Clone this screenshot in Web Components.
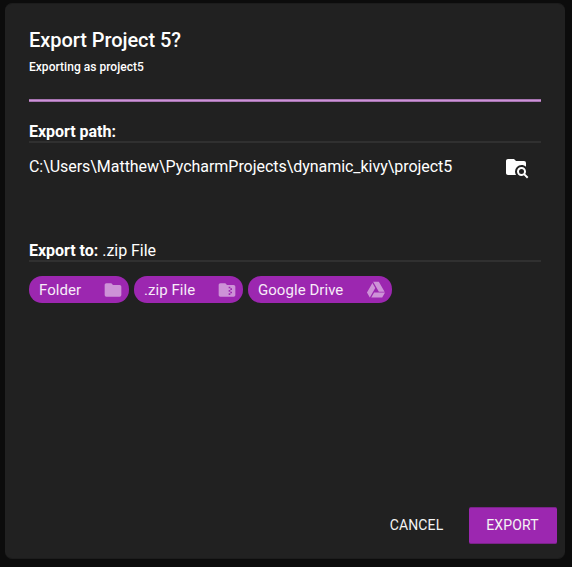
<!DOCTYPE html>
<html lang="en"><head><meta charset="utf-8"><title>Export Project</title>
<style>
html,body{margin:0;height:100%;background:#0c0c0c;overflow:hidden}
body{font-family:Roboto,"Liberation Sans",sans-serif;color:#fff}
</style></head><body>
<export-dialog></export-dialog>
<script>
const icons={
folder:'M10,4H4C2.89,4 2,4.89 2,6V18A2,2 0 0,0 4,20H20A2,2 0 0,0 22,18V8C22,6.89 21.1,6 20,6H12L10,4Z',
zip:'M20 6H12L10 4H4C2.9 4 2 4.9 2 6V18C2 19.1 2.9 20 4 20H20C21.1 20 22 19.1 22 18V8C22 6.9 21.1 6 20 6M18 12H16V14H18V16H16V18H14V16H16V14H14V12H16V10H14V8H16V10H18V12Z',
drive:'M7.71,3.5L1.15,15L4.58,21L11.13,9.5M9.73,15L6.3,21H19.42L22.85,15M22.28,14L15.42,2H8.58L8.57,2L15.43,14H22.28Z',
search:'M16.5,12C19,12 21,14 21,16.5C21,17.38 20.75,18.21 20.31,18.9L23.39,22L22,23.39L18.88,20.32C18.19,20.75 17.37,21 16.5,21C14,21 12,19 12,16.5C12,14 14,12 16.5,12M16.5,14A2.5,2.5 0 0,0 14,16.5A2.5,2.5 0 0,0 16.5,19A2.5,2.5 0 0,0 19,16.5A2.5,2.5 0 0,0 16.5,14M9,4L11,6H19A2,2 0 0,1 21,8V11.81C19.83,10.69 18.25,10 16.5,10A6.5,6.5 0 0,0 10,16.5C10,17.79 10.37,19 11,20H3C1.89,20 1,19.1 1,18V6C1,4.89 1.89,4 3,4H9Z'};
function define(name,render){
  customElements.define(name,class extends HTMLElement{
    constructor(){super();this.attachShadow({mode:'open'})}
    connectedCallback(){this.shadowRoot.innerHTML=render(this)}
  });
}
define('md-icon',el=>`<style>:host{display:block;width:24px;height:24px;flex:none}svg{display:block;width:100%;height:100%;fill:currentColor}</style>
<svg viewBox="0 0 24 24"><path d="${icons[el.getAttribute('name')]}"/></svg>`);
define('accent-line',()=>`<style>:host{display:block;height:1px;background:#ce93d8;border:solid #a673b0;border-width:1px 0}</style>`);
define('section-head',()=>`<style>:host{display:block;box-sizing:border-box;height:21px;font-size:16px;line-height:19px;letter-spacing:-.03px;border-bottom:2px solid #303030;white-space:nowrap}::slotted(b){font-weight:700}</style><slot></slot>`);
define('target-chip',el=>`<style>
:host{display:flex;align-items:center;justify-content:space-between;box-sizing:border-box;height:27px;padding:0 6px 0 10px;border-radius:13px;background:#9c27b0;font-size:15px;line-height:25px;letter-spacing:.05px;color:#f7ecf8;white-space:nowrap}
span{padding-top:2px}
md-icon{width:20px;height:20px;color:#cd92d7;margin-top:1px}</style><span><slot></slot></span><md-icon name="${el.getAttribute('icon')}"></md-icon>`);
define('dialog-button',()=>`<style>
:host{display:flex;align-items:center;justify-content:center;box-sizing:border-box;height:37px;padding:0 1px 2px 0;font-size:14px;letter-spacing:.15px;color:#f4f4f4;white-space:nowrap}
:host([raised]){background:#9c27b0;border:solid #7a2389;border-width:1px 0;border-radius:2px}</style><slot></slot>`);
define('export-dialog',()=>`<style>
:host{display:flex;flex-direction:column;box-sizing:border-box;width:560px;height:556px;margin:3px 0 0 5px;padding:24px 24px 14px;background:#212121;border:1px solid #1c1c1c;border-left-width:0;border-right-width:0;border-radius:7px}
h1{margin:0;font-size:20px;line-height:24px;letter-spacing:-.06px;font-weight:500}
p{margin:8px 0 25px;font-size:12px;line-height:14px;letter-spacing:.03px;font-weight:500}
.path{display:flex;justify-content:space-between;height:24px;margin:12px 12px 62px 0;font-size:16px;line-height:24px;letter-spacing:-.04px}
.chips{display:grid;grid-template-columns:100px 109px 144px;gap:5px;margin-top:14px}
.first{margin-top:20px}
footer{display:flex;gap:17px;justify-content:flex-end;margin:auto -16px 0 0}
.cancel{width:70px}.export{width:88px}
</style>
<h1>Export Project 5?</h1><p>Exporting as project5</p><accent-line></accent-line>
<section-head class="first"><b>Export path:</b></section-head>
<div class="path"><span>C:\\Users\\Matthew\\PycharmProjects\\dynamic_kivy\\project5</span><md-icon name="search"></md-icon></div>
<section-head><b>Export to:</b> .zip File</section-head>
<div class="chips"><target-chip icon="folder">Folder</target-chip><target-chip icon="zip">.zip File</target-chip><target-chip icon="drive">Google Drive</target-chip></div>
<footer><dialog-button class="cancel">CANCEL</dialog-button><dialog-button class="export" raised>EXPORT</dialog-button></footer>`);
</script></body></html>
